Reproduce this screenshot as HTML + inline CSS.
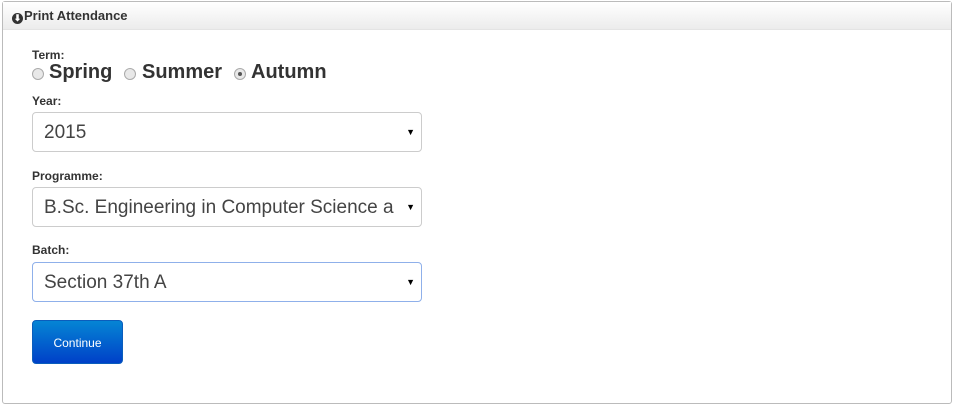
<!DOCTYPE html><html><head><style>
body{margin:0;width:955px;height:407px;background:#fff;font-family:"Liberation Sans",Arial,sans-serif;position:relative;overflow:hidden}
.panel{position:absolute;left:2px;top:1px;width:948px;height:401px;border:1px solid #bbb;border-radius:3px}
.hd{height:27px;background:linear-gradient(#fff,#ececec);border-bottom:1px solid #e4e4e4;font-size:13px;font-weight:bold;color:#333;line-height:28px;padding-left:9px;position:relative}
.ic{display:inline-block;width:11px;height:11px;border-radius:50%;background:#333;color:#fff;font-size:9px;line-height:11px;text-align:center;vertical-align:-1px;margin-right:1px}
.lbl{position:absolute;left:32px;font-size:12px;font-weight:bold;color:#333}
.sel{position:absolute;left:32px;border:1px solid #ccc;border-radius:4px;font-size:19px;color:#444;line-height:39px;padding-left:11px;padding-right:16px;box-sizing:border-box;width:390px;height:40px;overflow:hidden;white-space:nowrap}
.sel i{position:absolute;right:6px;top:0;font-style:normal;font-size:9px;color:#000;line-height:38px;background:#fff;width:9px;text-align:right}
.radio{position:absolute;top:61px;font-size:20px;font-weight:bold;color:#333}
.r{position:absolute;top:68px;width:10px;height:10px;border:1px solid #aaa;border-radius:50%;background:#e8e8e8}
.r.on:after{content:"";position:absolute;left:3px;top:3px;width:4px;height:4px;border-radius:50%;background:#555}
.btn{position:absolute;left:32px;top:320px;width:91px;height:44px;border-radius:4px;background:linear-gradient(#0585d4,#0040c8);color:#fff;font-size:12px;text-align:center;line-height:44px;border:1px solid #0a5dbc;box-sizing:border-box}
</style></head><body>
<div class="panel"><div class="hd"><span class="ic">⬇</span>Print Attendance</div></div>
<div class="lbl" style="top:48px">Term:</div>
<span class="r" style="left:32px"></span><span class="radio" style="left:49px">Spring</span>
<span class="r" style="left:124px"></span><span class="radio" style="left:142px">Summer</span>
<span class="r on" style="left:234px"></span><span class="radio" style="left:251px">Autumn</span>
<div class="lbl" style="top:94px">Year:</div>
<div class="sel" style="top:112px">2015<i>▼</i></div>
<div class="lbl" style="top:169px">Programme:</div>
<div class="sel" style="top:187px">B.Sc. Engineering in Computer Science a<i>▼</i></div>
<div class="lbl" style="top:243px">Batch:</div>
<div class="sel" style="top:262px;border-color:#8fb0ea">Section 37th A<i>▼</i></div>
<div class="btn">Continue</div>
</body></html>
